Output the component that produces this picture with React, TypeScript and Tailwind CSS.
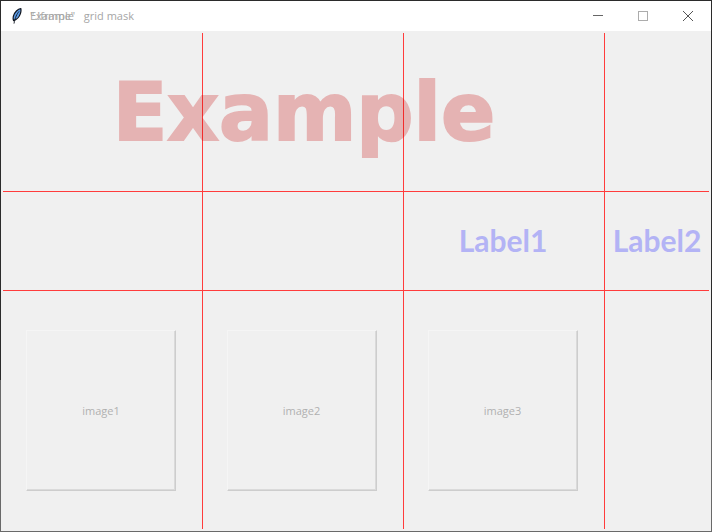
import React, { FC } from "react";

const IMAGES = ["image1", "image2", "image3"];

const FeatherIcon: FC = () => (
  <svg width="12" height="16" viewBox="0 0 12 16" aria-hidden="true">
    <path
      d="M9.8 0.6C7 0.8 3.4 4.2 2.4 8.2C2 10.2 2 11.6 2.6 12.6C5.6 11.6 8.4 8.8 9.4 5.6C10 3.6 10.2 2 9.8 0.6Z"
      fill="#5b9be6"
      stroke="#10151f"
      strokeWidth="1.2"
    />
    <path d="M8 3.4C6 6 4.2 9 3 15.6" fill="none" stroke="#10151f" strokeWidth="0.9" />
  </svg>
);

const TitleBar: FC = () => (
  <header className="flex h-[30px] items-center justify-between bg-white">
    <div className="flex items-center gap-[7px] pl-[10px]">
      <FeatherIcon />
      {/* two window titles share the same spot */}
      <div className="grid text-[11px] leading-4 whitespace-pre text-[#a6a6a6]">
        <h2 className="col-start-1 row-start-1">{'".!frame"   grid mask'}</h2>
        <h2 className="col-start-1 row-start-1">Example</h2>
      </div>
    </div>
    <div className="flex self-stretch">
      <button aria-label="Minimize" className="grid w-[45px] place-items-center text-[#666666]">
        <svg width="10" height="10" shapeRendering="crispEdges">
          <path d="M0 4.5H10" stroke="currentColor" />
        </svg>
      </button>
      <button aria-label="Maximize" className="grid w-[45px] place-items-center text-[#acacac]">
        <svg width="10" height="10" shapeRendering="crispEdges">
          <rect x="0.5" y="0.5" width="9" height="9" fill="none" stroke="currentColor" />
        </svg>
      </button>
      <button aria-label="Close" className="grid w-[46px] place-items-center text-[#555555]">
        <svg width="10" height="10">
          <path d="M0 0L10 10M10 0L0 10" stroke="currentColor" />
        </svg>
      </button>
    </div>
  </header>
);

const App: FC = () => (
  <div className="flex min-h-screen flex-col bg-[linear-gradient(#2b2b2b_71.5%,#696969_71.5%)] p-px font-['Open_Sans','Noto_Sans',sans-serif]">
    <TitleBar />
    <main className="grid flex-1 grid-cols-[200fr_201fr_201fr_104fr] grid-rows-[159px_99px_1fr] bg-[#f0f0f0] p-[2px]">
      <div className="col-start-1 row-start-1 border-r border-b border-[#ff3c3c]" />
      <div className="col-start-2 row-start-1 border-r border-b border-[#ff3c3c]" />
      <div className="col-start-3 row-start-1 border-r border-b border-[#ff3c3c]" />
      <div className="col-start-4 row-start-1 border-b border-[#ff3c3c]" />
      <h1 className="col-span-3 col-start-1 row-start-1 self-center text-center font-['DejaVu_Sans',sans-serif] text-[80px] leading-[96px] font-bold text-[#c80000] opacity-25 [-webkit-text-stroke:2px_#c80000]">
        Example
      </h1>

      <div className="border-r border-b border-[#ff3c3c]" />
      <div className="border-r border-b border-[#ff3c3c]" />
      <div className="flex items-center justify-center border-r border-b border-[#ff3c3c] pr-[2px] pb-[2px] font-['Lato',sans-serif] text-[30px] leading-9 font-bold text-[#b3b3f5]">
        Label1
      </div>
      <div className="flex items-center justify-center border-b border-[#ff3c3c] pb-[2px] font-['Lato',sans-serif] text-[30px] leading-9 font-bold text-[#b3b3f5]">
        Label2
      </div>

      {IMAGES.map((image) => (
        <div key={image} className="flex items-center justify-center border-r border-[#ff3c3c] pr-[3px]">
          <button className="h-[161px] w-[150px] border border-t-[#f5f5f5] border-r-[#cdcdcd] border-b-[#cdcdcd] border-l-[#f5f5f5] pt-[2px] text-[11px] leading-4 text-[#b0b0b0] shadow-[inset_-1px_-1px_#dadada]">
            {image}
          </button>
        </div>
      ))}
    </main>
  </div>
);

export default App;
